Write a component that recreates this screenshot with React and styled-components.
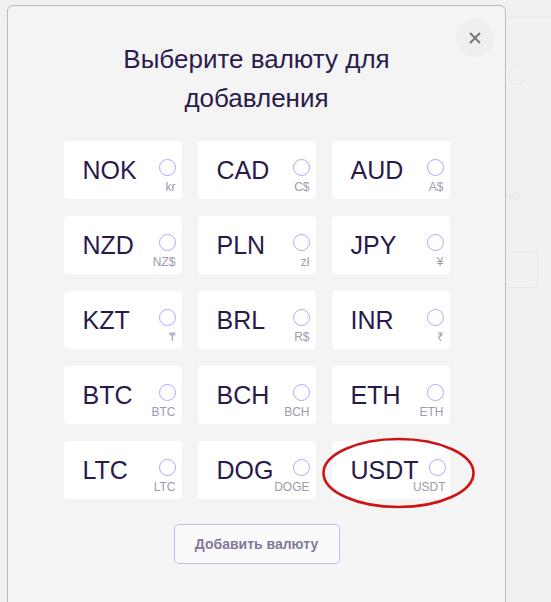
import React from "react";
import styled, { createGlobalStyle } from "styled-components";

const GlobalStyle = createGlobalStyle`
  html, body {
    margin: 0;
    padding: 0;
    background: #f1f1f1;
    font-family: "Liberation Sans", Arial, sans-serif;
    overflow: hidden;
  }
`;

const currencies = [
  { code: "NOK", sign: "kr" },
  { code: "CAD", sign: "C$" },
  { code: "AUD", sign: "A$" },
  { code: "NZD", sign: "NZ$" },
  { code: "PLN", sign: "zł" },
  { code: "JPY", sign: "¥" },
  { code: "KZT", sign: "₸" },
  { code: "BRL", sign: "R$" },
  { code: "INR", sign: "₹" },
  { code: "BTC", sign: "BTC" },
  { code: "BCH", sign: "BCH" },
  { code: "ETH", sign: "ETH" },
  { code: "LTC", sign: "LTC" },
  { code: "DOG", sign: "DOGE" },
  { code: "USDT", sign: "USDT" },
];

const Page = styled.div`
  position: relative;
  width: 551px;
  height: 602px;
  overflow: hidden;
`;

const TopBar = styled.div`
  height: 17px;
  border-bottom: 1px solid #e9e8ef;
`;

const GhostCircle = styled.div`
  position: absolute;
  left: 508px;
  top: 66px;
  width: 17px;
  height: 17px;
  border-radius: 50%;
  border: 1px solid #eae8f3;
`;

const GhostText = styled.div`
  position: absolute;
  left: 504px;
  top: 188px;
  font-size: 13px;
  font-weight: bold;
  color: #e6e6e6;
`;

const GhostBox = styled.div`
  position: absolute;
  left: 490px;
  top: 252px;
  width: 46px;
  height: 34px;
  border: 1px solid #e8e5f6;
  border-radius: 4px;
`;

const Modal = styled.div`
  position: absolute;
  left: 7px;
  top: 5px;
  width: 497px;
  height: 640px;
  background: #f4f4f4;
  border: 1px solid #bdbdbd;
  border-radius: 6px;
  display: flex;
  flex-direction: column;
  align-items: center;
  padding-top: 34px;
`;

const CloseButton = styled.button`
  position: absolute;
  top: 13px;
  right: 11px;
  width: 38px;
  height: 38px;
  border-radius: 50%;
  border: none;
  background: #efefef;
  display: flex;
  align-items: center;
  justify-content: center;
  padding: 0;
  cursor: pointer;
`;

const Title = styled.h2`
  margin: 0 0 23px;
  max-width: 300px;
  text-align: center;
  font-size: 26px;
  line-height: 39px;
  font-weight: normal;
  color: #2b1c4d;
`;

const Grid = styled.div`
  display: grid;
  grid-template-columns: repeat(3, 118px);
  grid-auto-rows: 58px;
  column-gap: 16px;
  row-gap: 17px;
`;

const Card = styled.label`
  display: flex;
  align-items: center;
  background: #ffffff;
  border-radius: 4px;
  padding: 0 6px 0 19px;
  cursor: pointer;
`;

const Code = styled.span`
  font-size: 25px;
  color: #2a1a4c;
  margin-right: 9px;
  white-space: nowrap;
`;

const Side = styled.div`
  margin-left: auto;
  flex-shrink: 0;
  width: 18px;
  align-self: flex-start;
  padding-top: 18px;
  display: flex;
  flex-direction: column;
  align-items: flex-end;
  gap: 4px;
`;

const Radio = styled.span`
  width: 15px;
  height: 15px;
  border-radius: 50%;
  border: 1.5px solid #b2a5ff;
`;

const Sign = styled.span`
  font-size: 12px;
  line-height: 14px;
  color: #a09aad;
  white-space: nowrap;
`;

const AddButton = styled.button`
  margin-top: 25px;
  width: 166px;
  height: 40px;
  border: 1px solid #c6b9fb;
  border-radius: 5px;
  background: #fafafa;
  font-family: "Liberation Sans", Arial, sans-serif;
  font-weight: bold;
  font-size: 14px;
  color: #85789a;
  cursor: pointer;
`;

const Annotation = styled.svg`
  position: absolute;
  left: 0;
  top: 0;
  pointer-events: none;
`;

export default function App() {
  return (
    <>
      <GlobalStyle />
      <Page>
        <TopBar />
        <GhostCircle />
        <GhostText>но</GhostText>
        <GhostBox />
        <Modal>
          <CloseButton aria-label="close">
            <svg width="12" height="12" viewBox="0 0 12 12">
              <path d="M1 1L11 11M11 1L1 11" stroke="#7a7472" strokeWidth="1.9" />
            </svg>
          </CloseButton>
          <Title>Выберите валюту для добавления</Title>
          <Grid>
            {currencies.map((c) => (
              <Card key={c.code}>
                <Code>{c.code}</Code>
                <Side>
                  <Radio />
                  <Sign>{c.sign}</Sign>
                </Side>
              </Card>
            ))}
          </Grid>
          <AddButton>Добавить валюту</AddButton>
        </Modal>
        <Annotation width="551" height="602">
          <ellipse cx="398.5" cy="473" rx="75" ry="34" fill="none" stroke="#cc1414" strokeWidth="2.6" />
        </Annotation>
      </Page>
    </>
  );
}
